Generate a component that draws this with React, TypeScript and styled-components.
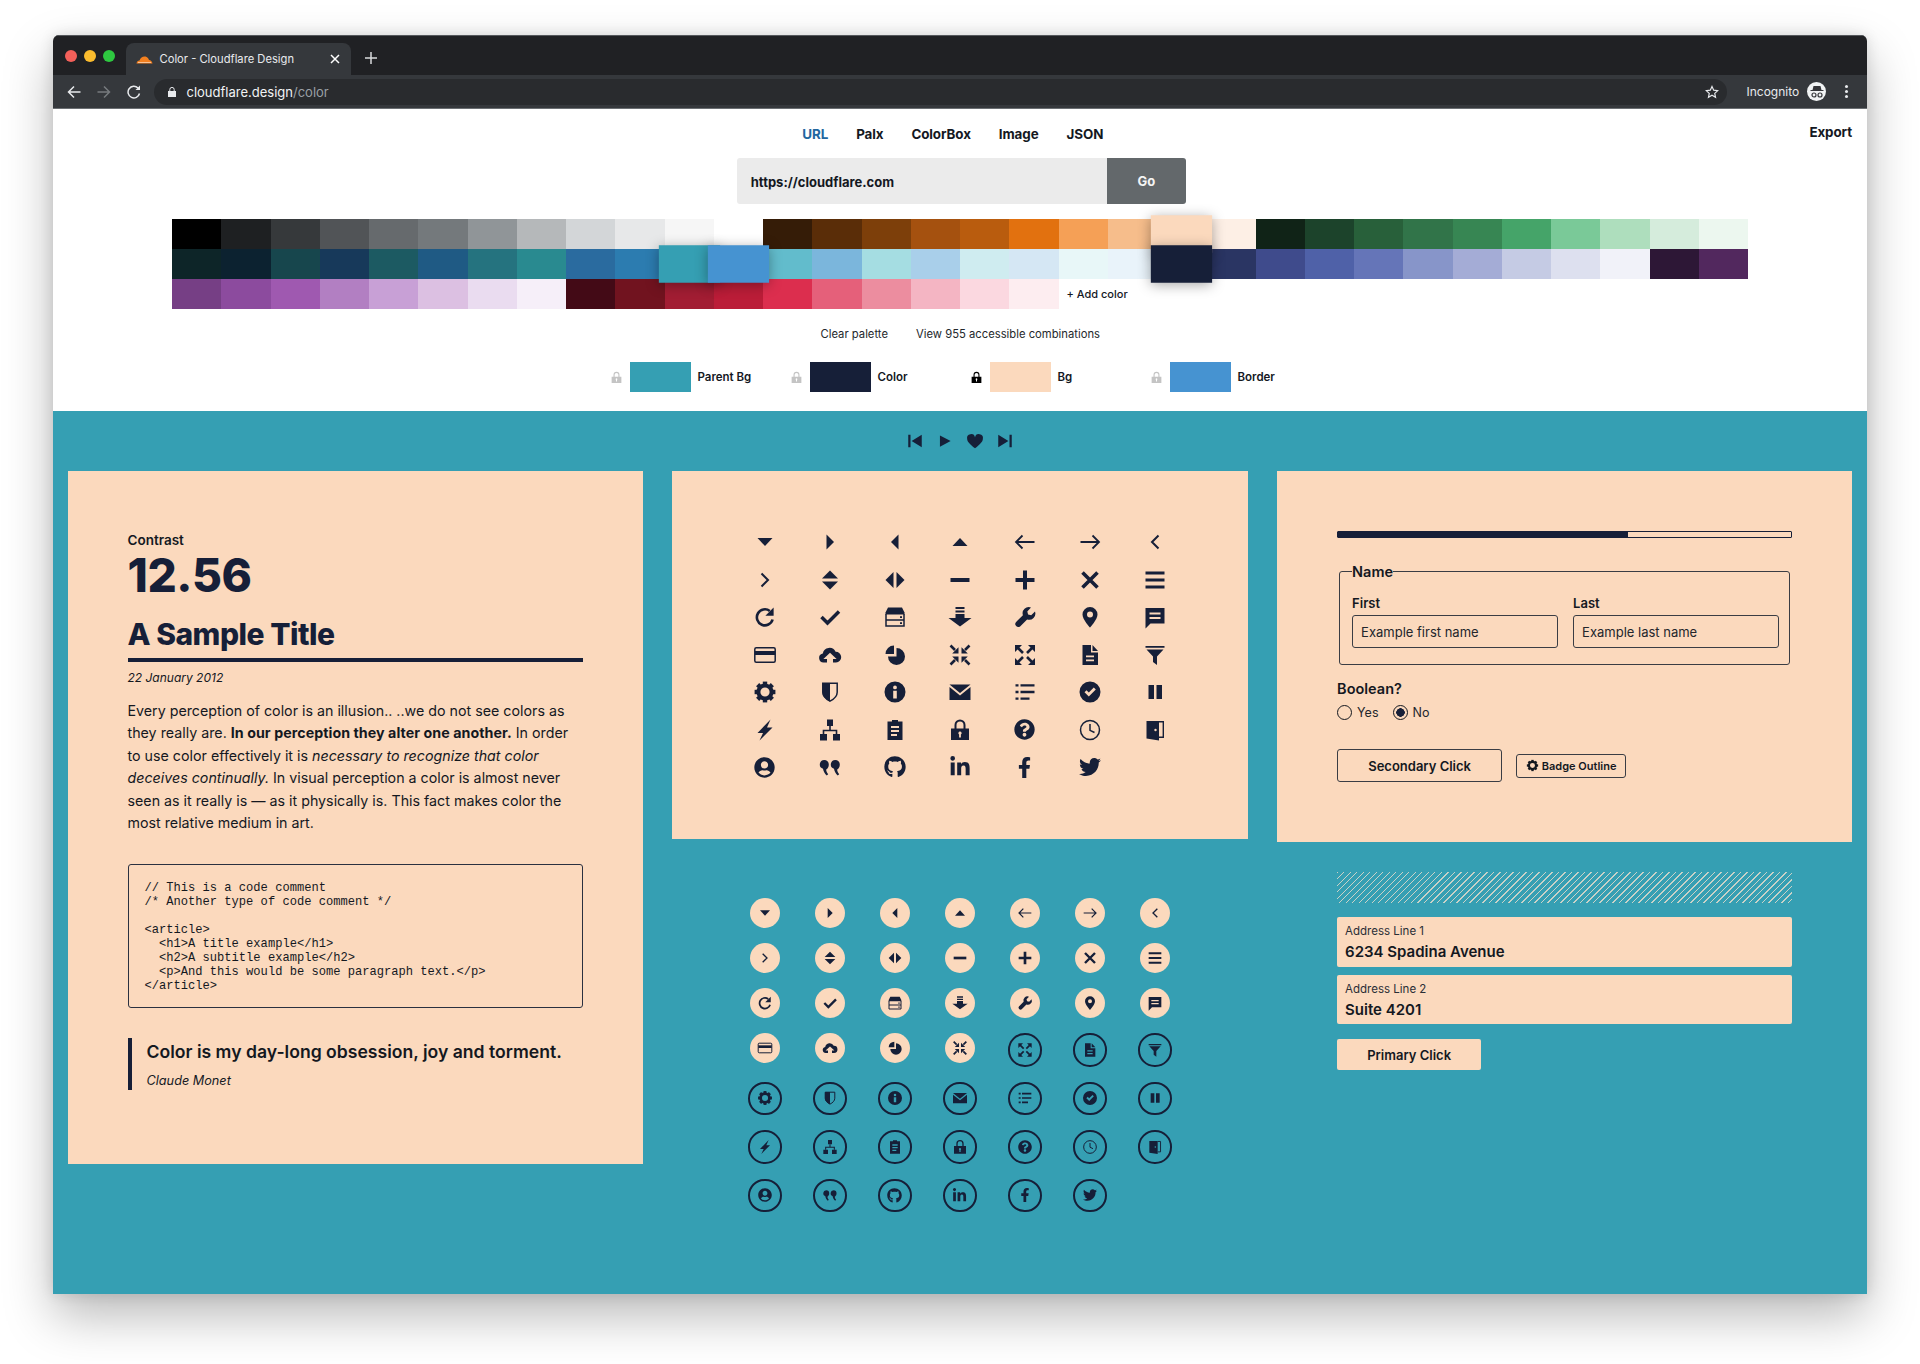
import React from 'react'
import styled, { createGlobalStyle } from 'styled-components'
import { FaFacebookF, FaGithub, FaLinkedinIn, FaQuestionCircle, FaTwitter, FaUserCircle } from 'react-icons/fa'

const TEAL = '#359fb3'
const PEACH = '#fbd9bd'
const NAVY = '#161f38'
const INK = '#14181f'

const GlobalStyle = createGlobalStyle`
    html, body {
        margin: 0;
        background: #ffffff;
        font-family: 'Inter', 'Liberation Sans', sans-serif;
        color: ${INK};
    }
    * {
        box-sizing: border-box;
    }
`

const P = (d: string) => <path d={d} fillRule="evenodd" />
const S = (d: string, w = 2) => <path d={d} fill="none" stroke="currentColor" strokeWidth={w} />

const Gear = () => (
    <>
        <circle cx="12" cy="12" r="6.6" fill="none" stroke="currentColor" strokeWidth="4" />
        {[0, 45, 90, 135, 180, 225, 270, 315].map((a) => (
            <rect key={a} x="9.8" y="1.6" width="4.4" height="4" transform={`rotate(${a} 12 12)`} />
        ))}
    </>
)

const QUOTE_MARK =
    'M6.3 5A4.5 4.5 0 0 0 5 13.8c.4 2.6 1.6 4.7 3.7 6.7l1.5-1.2C8.8 17.5 8.2 16 8.2 14.5c1.6-.9 2.6-2.5 2.6-5A4.5 4.5 0 0 0 6.3 5z'

const glyphs: Record<string, React.ReactNode> = {
    caretDown: P('M4.5 8h15L12 16z'),
    caretRight: P('M8.5 4.5v15L16 12z'),
    caretLeft: P('M15.5 4.5v15L8 12z'),
    caretUp: P('M4.5 16h15L12 8z'),
    arrowLeft: S('M21.5 12H3M9.5 5.5 3 12l6.5 6.5', 1.8),
    arrowRight: S('M2.5 12H21M14.5 5.5 21 12l-6.5 6.5', 1.8),
    chevronLeft: S('M15.5 5.5 9 12l6.5 6.5'),
    chevronRight: S('M8.5 5.5 15 12l-6.5 6.5'),
    upDown: P('M12 2.5 20 10.5H4zM12 21.5 4 13.5h16z'),
    leftRight: P('M2.5 12 10.5 4v16zM21.5 12 13.5 4v16z'),
    minus: P('M2.5 10h19v4h-19z'),
    plus: P('M10 2.5h4V10h7.5v4H14v7.5h-4V14H2.5v-4H10z'),
    close: S('M4.5 4.5 19.5 19.5M19.5 4.5 4.5 19.5', 3.6),
    menu: P('M2.5 3.5h19v3h-19zM2.5 10.5h19v3h-19zM2.5 17.5h19v3h-19z'),
    refresh: (
        <>
            {S('M19.6 14.5A8 8 0 1 1 16.8 6', 2.6)}
            {P('M20.6 2.6v8.2h-8.2z')}
        </>
    ),
    check: S('M3.5 12 9.5 18 21 6.5', 3.5),
    drawer: (
        <>
            {P('M5 2.5h14l2.5 5v2h-19v-2z')}
            {S('M3 9v12h18V9M3 15h18', 1.5)}
            {P('M17 11.3h2v1.8h-2zM17 17.3h2v1.8h-2z')}
        </>
    ),
    download: P('M7.5 2h9v2h-9zM7.5 5.5h9v2h-9zM7.5 9h9v4h7L12 21.5.5 13h7z'),
    wrench: P(
        'M22 6.5l-3.8 3.7-3.1-.7-.8-3.1L18 2.5a6.2 6.2 0 0 0-8.1 7.7L2.9 17.2a3 3 0 0 0 4.2 4.2l7-7A6.2 6.2 0 0 0 22 6.5z',
    ),
    pin: P(
        'M12 2a7.5 7.5 0 0 0-7.5 7.5C4.5 14.5 12 22.5 12 22.5s7.5-8 7.5-13A7.5 7.5 0 0 0 12 2zm0 10.5a3 3 0 1 1 0-6 3 3 0 0 1 0 6z',
    ),
    comment: P('M2.5 3h19v15.5H7.5L2.5 23.5zM6.5 7.5v2h11v-2zM6.5 12v2h11v-2z'),
    card: (
        <>
            <rect x="1.8" y="4.8" width="20.4" height="14.4" rx="1.5" fill="none" stroke="currentColor" strokeWidth="1.5" />
            <rect x="2" y="8" width="20" height="4" />
        </>
    ),
    cloud: P(
        'M6 19.5A4.6 4.6 0 0 1 4.8 10.4 6.8 6.8 0 0 1 17.6 8.7 5.4 5.4 0 0 1 18 19.5h-3v-3.6h3.6L12 9.8l-6.6 6.1H9v3.6z',
    ),
    pie: P('M13.5 5v8.5H5a8.5 8.5 0 1 0 8.5-8.5zM11 2.5V11H2.5A8.5 8.5 0 0 1 11 2.5z'),
    collapse: (
        <>
            {P('M10.5 10.5H4.2L10.5 4.2zM13.5 10.5h6.3L13.5 4.2zM10.5 13.5H4.2L10.5 19.8zM13.5 13.5h6.3L13.5 19.8z')}
            {S('M2.5 2.5 7 7M21.5 2.5 17 7M2.5 21.5 7 17M21.5 21.5 17 17', 2.6)}
        </>
    ),
    expand: (
        <>
            {P('M2 2h7L2 9zM22 2h-7l7 7zM2 22h7l-7-7zM22 22h-7l7-7z')}
            {S('M4 4 10 10M20 4 14 10M4 20 10 14M20 20 14 14', 2.6)}
        </>
    ),
    file: P('M4.5 2H13v7.5h7V22H4.5zM14.5 2 20 8h-5.5zM8 12.5v1.8h8v-1.8zM8 16.5v1.8h8v-1.8z'),
    filter: P('M2.5 3h19v1.8h-19zM3.5 6.5h17L14 13.5V22l-4-3v-5.5z'),
    gear: <Gear />,
    shield: (
        <>
            {S('M4.8 3.3h14.4v9c0 4-3.2 6.8-7.2 8.9-4-2.1-7.2-4.9-7.2-8.9z', 1.5)}
            {P('M4.5 3H12v18.5c-4-2-7.5-5-7.5-9z')}
        </>
    ),
    info: P(
        'M12 1.5a10.5 10.5 0 1 0 0 21 10.5 10.5 0 0 0 0-21zM12 5.5a1.9 1.9 0 1 1 0 3.8 1.9 1.9 0 0 1 0-3.8zM10.2 10.8h3.6v7.7h-3.6z',
    ),
    mail: P('M1.5 4.5h21L12 13zM1.5 7 12 15.5 22.5 7v13h-21z'),
    list: P('M2.5 4.2h3v2.4h-3zM7.5 4.2h14v2.4h-14zM2.5 10.8h3v2.4h-3zM7.5 10.8h14v2.4h-14zM2.5 17.4h3v2.4h-3zM7.5 17.4h9v2.4h-9z'),
    checkCircle: P('M12 1.5a10.5 10.5 0 1 0 0 21 10.5 10.5 0 0 0 0-21zM6.5 12.2l2-2 2.3 2.3 5-5 2 2-7 7z'),
    pause: P('M5.5 5H11v14H5.5zM13.5 5H19v14h-5.5z'),
    bolt: P('M17.5 1.5 4.5 15H10L6.5 22.5 19.5 9.5H14z'),
    sitemap: (
        <>
            {P('M9 1.5h6V8H9zM2 16h7v6.5H2zM15 16h7v6.5h-7z')}
            {S('M12 8v4M5.5 16v-3.5h13V16', 1.6)}
        </>
    ),
    clipboard: P('M4.5 3.5H9V2h6v1.5h4.5V22h-15zM8 8v2h8V8zM8 12v2h8v-2zM8 16v2h6v-2z'),
    lock: (
        <>
            {S('M7.5 11V7a4.5 4.5 0 0 1 9 0v4', 2)}
            {P('M3 10.5h18V22H3zM12 13.5a1.7 1.7 0 0 0-.9 3.1v2.9h1.8v-2.9a1.7 1.7 0 0 0-.9-3.1z')}
        </>
    ),
    clock: (
        <>
            <circle cx="12" cy="12" r="9.5" fill="none" stroke="currentColor" strokeWidth="1.5" />
            {S('M12 6v6.3l4.5 2.2', 1.5)}
        </>
    ),
    door: (
        <>
            {P('M3.5 3H16v19.5l-12.5-2zM12.5 10.8a1.2 1.2 0 1 0 0 2.4 1.2 1.2 0 0 0 0-2.4z')}
            {S('M16 3.7h4.3v15.6H16', 1.4)}
        </>
    ),
    quote: (
        <>
            <path d={QUOTE_MARK} />
            <path d={QUOTE_MARK} transform="translate(11 0)" />
        </>
    ),
}

const brands: Record<string, [React.ComponentType<{ size?: number }>, number]> = {
    question: [FaQuestionCircle, 0.88],
    user: [FaUserCircle, 0.88],
    github: [FaGithub, 0.92],
    linkedin: [FaLinkedinIn, 0.92],
    facebook: [FaFacebookF, 0.88],
    twitter: [FaTwitter, 0.9],
}

const iconOrder = [
    'caretDown', 'caretRight', 'caretLeft', 'caretUp', 'arrowLeft', 'arrowRight', 'chevronLeft',
    'chevronRight', 'upDown', 'leftRight', 'minus', 'plus', 'close', 'menu',
    'refresh', 'check', 'drawer', 'download', 'wrench', 'pin', 'comment',
    'card', 'cloud', 'pie', 'collapse', 'expand', 'file', 'filter',
    'gear', 'shield', 'info', 'mail', 'list', 'checkCircle', 'pause',
    'bolt', 'sitemap', 'clipboard', 'lock', 'question', 'clock', 'door',
    'user', 'quote', 'github', 'linkedin', 'facebook', 'twitter',
]

const Icon: React.FC<{ name: string; size?: number }> = ({ name, size = 24 }) => {
    const brand = brands[name]
    if (brand) {
        const Brand = brand[0]
        return <Brand size={Math.round(size * brand[1])} />
    }
    return (
        <svg width={size} height={size} viewBox="0 0 24 24" fill="currentColor">
            {glyphs[name]}
        </svg>
    )
}

const palette: string[][] = [
    [
        '#000000', '#1e2022', '#36393b', '#515457', '#666a6d', '#74797c', '#909598', '#b5b8ba', '#d3d6d8', '#e7e8e9', '#f6f6f6', '#ffffff',
        '#351c07', '#5a2d08', '#7d3f0a', '#a5510f', '#b95c0e', '#e2710f', '#f5a056', '#f6bd8b', PEACH, '#fdefe5',
        '#102317', '#1c432b', '#28603a', '#317449', '#378653', '#45a469', '#7ac998', '#aedebd', '#d5ecdc', '#ecf7ef',
    ],
    [
        '#0d2528', '#0c2230', '#17464d', '#17395a', '#1c5a62', '#1f5a84', '#25737f', '#298a90', '#2a6b9f', '#2c7cb0', TEAL, '#4693d1',
        '#62bccc', '#7bb6dc', '#a5dde2', '#a9cfea', '#cfecf0', '#d5e7f4', '#e8f7f8', '#e9f3fa', NAVY, '#2a3563',
        '#3f4b8c', '#4f61a8', '#6575b8', '#8795c9', '#a4acd6', '#c5cbe4', '#dde0ef', '#f1f2f9', '#2d1736', '#52285e',
    ],
    [
        '#763f85', '#8c4b9e', '#9f59b0', '#b27fc2', '#c8a0d6', '#dcc0e2', '#eadcf0', '#f6eff9',
        '#430a16', '#71131f', '#a21d33', '#bb1d38', '#dc2e4e', '#e5607a', '#ec8d9f', '#f4b5c3', '#fbd8e0', '#fdedf0',
    ],
]

const picked: Record<string, number> = { '0-20': 3, '1-10': 2, '1-11': 3, '1-20': 4 }

const roles = [
    { label: 'Parent Bg', color: TEAL, locked: false },
    { label: 'Color', color: NAVY, locked: false },
    { label: 'Bg', color: PEACH, locked: true },
    { label: 'Border', color: '#4693d1', locked: false },
]

const codeSample = `// This is a code comment
/* Another type of code comment */

<article>
  <h1>A title example</h1>
  <h2>A subtitle example</h2>
  <p>And this would be some paragraph text.</p>
</article>`

const App: React.FunctionComponent = () => {
    return (
        <Page>
            <GlobalStyle />
            <Window>
                <TabStrip>
                    <Lights>
                        <Light color="#f4605a" />
                        <Light color="#fbbc2e" />
                        <Light color="#2ec840" />
                    </Lights>
                    <Tab>
                        <svg width="17" height="9" viewBox="0 0 34 18">
                            <path d="M1 17c.5-4 3-6 6-6 2-6 7-9 12-8 3 .7 6 3 7 7 3 0 6 3 7 7z" fill="#f38020" />
                            <path d="M4 14h26v1.6H4z" fill="#fbd9bd" />
                        </svg>
                        <TabTitle>Color - Cloudflare Design</TabTitle>
                        <TabClose>
                            <svg width="10" height="10" viewBox="0 0 10 10">
                                <path d="M1 1l8 8M9 1 1 9" stroke="#fff" strokeWidth="1.5" />
                            </svg>
                        </TabClose>
                    </Tab>
                    <NewTab>
                        <svg width="12" height="12" viewBox="0 0 12 12">
                            <path d="M6 0v12M0 6h12" stroke="#d8dadc" strokeWidth="1.5" />
                        </svg>
                    </NewTab>
                </TabStrip>
                <Toolbar>
                    <NavIcons>
                        <svg width="14" height="14" viewBox="0 0 14 14" fill="none" stroke="#e8eaed" strokeWidth="1.5">
                            <path d="M13.5 7H1.5M7 1.5 1.5 7 7 12.5" />
                        </svg>
                        <svg width="14" height="14" viewBox="0 0 14 14" fill="none" stroke="#777a7e" strokeWidth="1.5">
                            <path d="M.5 7h12M7 1.5 12.5 7 7 12.5" />
                        </svg>
                        <svg width="14" height="14" viewBox="0 0 14 14" fill="none" stroke="#e8eaed" strokeWidth="1.5">
                            <path d="M12.5 8.5A5.8 5.8 0 1 1 11 3" />
                            <path d="M13 .5V5H8.5z" fill="#e8eaed" stroke="none" />
                        </svg>
                    </NavIcons>
                    <UrlPill>
                        <svg width="8" height="10" viewBox="0 0 8 10" fill="#e8eaed">
                            <path d="M0 4h8v6H0z" />
                            <path d="M1.8 4V2.6a2.2 2.2 0 0 1 4.4 0V4" fill="none" stroke="#e8eaed" />
                        </svg>
                        <UrlText>
                            cloudflare.design<UrlPath>/color</UrlPath>
                        </UrlText>
                        <StarSlot>
                            <svg width="14" height="14" viewBox="0 0 24 24" fill="none" stroke="#e8eaed" strokeWidth="2">
                                <path d="M12 2.5l2.9 6.3 6.9.8-5.1 4.7 1.4 6.8L12 17.6l-6.1 3.5 1.4-6.8L2.2 9.6l6.9-.8z" />
                            </svg>
                        </StarSlot>
                    </UrlPill>
                    <Incognito>Incognito</Incognito>
                    <Avatar>
                        <svg width="16" height="16" viewBox="0 0 16 16" fill="#35363a">
                            <path d="M4.5 2h7l1 4h2v1h-13V6h2z" />
                            <circle cx="5" cy="11" r="2" fill="none" stroke="#35363a" strokeWidth="1.2" />
                            <circle cx="11" cy="11" r="2" fill="none" stroke="#35363a" strokeWidth="1.2" />
                        </svg>
                    </Avatar>
                    <Kebab>
                        <i />
                        <i />
                        <i />
                    </Kebab>
                </Toolbar>

                <Header>
                    <TopNav>
                        <NavLink $active>URL</NavLink>
                        <NavLink>Palx</NavLink>
                        <NavLink>ColorBox</NavLink>
                        <NavLink>Image</NavLink>
                        <NavLink>JSON</NavLink>
                        <ExportLink>Export</ExportLink>
                    </TopNav>
                    <UrlForm>
                        <UrlInput>https://cloudflare.com</UrlInput>
                        <GoButton>Go</GoButton>
                    </UrlForm>
                    <Palette>
                        {palette.map((row, r) =>
                            row.map((color, c) => (
                                <Swatch key={`${r}-${c}`} $color={color} $pick={picked[`${r}-${c}`] ?? 0} />
                            )),
                        )}
                        <AddColor>+ Add color</AddColor>
                    </Palette>
                    <PaletteLinks>
                        <span>Clear palette</span>
                        <span>View 955 accessible combinations</span>
                    </PaletteLinks>
                    <Roles>
                        {roles.map((role) => (
                            <Role key={role.label}>
                                <LockSlot $locked={role.locked}>
                                    <Icon name="lock" size={13} />
                                </LockSlot>
                                <RoleChip $color={role.color} />
                                <RoleLabel>{role.label}</RoleLabel>
                            </Role>
                        ))}
                    </Roles>
                </Header>

                <Stage>
                    <Transport>
                        <svg width="18" height="18" viewBox="0 0 16 16" fill="currentColor">
                            <path d="M2 2.5h2v11H2zM14 2.5v11L5 8z" />
                        </svg>
                        <svg width="18" height="18" viewBox="0 0 16 16" fill="currentColor">
                            <path d="M3.5 3v10L13 8z" />
                        </svg>
                        <svg width="18" height="18" viewBox="0 0 16 16" fill="currentColor">
                            <path d="M8 14.5C3.5 11 1 8.5 1 6a3.5 3.5 0 0 1 7-1.2A3.5 3.5 0 0 1 15 6c0 2.5-2.5 5-7 8.5z" />
                        </svg>
                        <svg width="18" height="18" viewBox="0 0 16 16" fill="currentColor">
                            <path d="M14 2.5h-2v11h2zM2 2.5v11L11 8z" />
                        </svg>
                    </Transport>
                    <Columns>
                        <ArticleCard>
                            <ContrastLabel>Contrast</ContrastLabel>
                            <ContrastValue>12.56</ContrastValue>
                            <Title>A Sample Title</Title>
                            <DateLine>22 January 2012</DateLine>
                            <Body>
                                Every perception of color is an illusion.. ..we do not see colors as they really are.{' '}
                                <strong>In our perception they alter one another.</strong> In order to use color
                                effectively it is <em>necessary to recognize that color deceives continually.</em> In
                                visual perception a color is almost never seen as it really is — as it physically is.
                                This fact makes color the most relative medium in art.
                            </Body>
                            <CodeBlock>{codeSample}</CodeBlock>
                            <Quote>
                                <QuoteText>Color is my day-long obsession, joy and torment.</QuoteText>
                                <QuoteSource>Claude Monet</QuoteSource>
                            </Quote>
                        </ArticleCard>

                        <div>
                            <IconCard>
                                {iconOrder.map((name) => (
                                    <IconCell key={name}>
                                        <Icon name={name} />
                                    </IconCell>
                                ))}
                            </IconCard>
                            <RoundGrid>
                                {iconOrder.map((name, i) =>
                                    i < 25 ? (
                                        <SolidRound key={name}>
                                            <Icon name={name} size={16} />
                                        </SolidRound>
                                    ) : (
                                        <RingRound key={name}>
                                            <Icon name={name} size={16} />
                                        </RingRound>
                                    ),
                                )}
                            </RoundGrid>
                        </div>

                        <div>
                            <FormCard>
                                <Progress>
                                    <ProgressFill style={{ width: '64%' }} />
                                </Progress>
                                <NameFieldset>
                                    <Legend>Name</Legend>
                                    <NameFields>
                                        <div>
                                            <FieldLabel>First</FieldLabel>
                                            <TextField>Example first name</TextField>
                                        </div>
                                        <div>
                                            <FieldLabel>Last</FieldLabel>
                                            <TextField>Example last name</TextField>
                                        </div>
                                    </NameFields>
                                </NameFieldset>
                                <BooleanLabel>Boolean?</BooleanLabel>
                                <RadioRow>
                                    <RadioDot />
                                    <RadioText>Yes</RadioText>
                                    <RadioDot $on />
                                    <RadioText>No</RadioText>
                                </RadioRow>
                                <ButtonRow>
                                    <SecondaryButton>Secondary Click</SecondaryButton>
                                    <Badge>
                                        <Icon name="gear" size={13} />
                                        Badge Outline
                                    </Badge>
                                </ButtonRow>
                            </FormCard>
                            <AddressColumn>
                                <Stripes />
                                <AddressBox>
                                    <AddressLabel>Address Line 1</AddressLabel>
                                    <AddressValue>6234 Spadina Avenue</AddressValue>
                                </AddressBox>
                                <AddressBox $tight>
                                    <AddressLabel>Address Line 2</AddressLabel>
                                    <AddressValue>Suite 4201</AddressValue>
                                </AddressBox>
                                <PrimaryButton>Primary Click</PrimaryButton>
                            </AddressColumn>
                        </div>
                    </Columns>
                </Stage>
            </Window>
        </Page>
    )
}

const Page = styled.div`
    width: 1920px;
    height: 1364px;
    padding: 35px 53px 0 52.5px;
    overflow: hidden;
`

const Window = styled.div`
    height: 1259px;
    border-radius: 6px 6px 0 0;
    overflow: hidden;
    display: flex;
    flex-direction: column;
    box-shadow: 0 22px 50px rgba(0, 0, 0, 0.28), 0 0 14px rgba(0, 0, 0, 0.12);
    background: #ffffff;
`

const TabStrip = styled.div`
    height: 40px;
    flex: none;
    display: flex;
    align-items: flex-end;
    background: #202124;
    border-top: 1px solid #55585c;
`

const Lights = styled.div`
    width: 73px;
    align-self: flex-start;
    display: flex;
    gap: 7px;
    padding: 14px 0 0 12px;
`

const Light = styled.span<{ color: string }>`
    width: 12px;
    height: 12px;
    border-radius: 50%;
    background: ${(p) => p.color};
`

const Tab = styled.div`
    width: 225px;
    height: 32px;
    display: flex;
    align-items: center;
    padding: 0 10px;
    border-radius: 8px 8px 0 0;
    background: #35383c;
`

const TabTitle = styled.span`
    margin-left: 7px;
    flex: 1;
    font-size: 11.2px;
    color: #e8eaed;
`

const TabClose = styled.span`
    display: flex;
    margin-right: 1px;
`

const NewTab = styled.span`
    display: flex;
    align-self: center;
    margin: 4px 0 0 14px;
`

const Toolbar = styled.div`
    height: 34px;
    flex: none;
    display: flex;
    align-items: center;
    background: #35383c;
    border-bottom: 1px solid #6b6f73;
    color: #e8eaed;
`

const NavIcons = styled.div`
    width: 101px;
    display: flex;
    gap: 16px;
    padding-left: 14px;
`

const UrlPill = styled.div`
    width: 1573px;
    height: 26px;
    display: flex;
    align-items: center;
    padding: 0 8px 0 14px;
    border-radius: 13px;
    background: #292b2e;
`

const UrlText = styled.span`
    margin-left: 11px;
    flex: 1;
    font-size: 13px;
    color: #f1f3f4;
`

const UrlPath = styled.span`
    color: #9aa0a6;
`

const StarSlot = styled.span`
    display: flex;
`

const Incognito = styled.span`
    margin-left: 20px;
    font-size: 12px;
    white-space: nowrap;
`

const Avatar = styled.span`
    width: 19px;
    height: 19px;
    margin-left: 8px;
    display: flex;
    align-items: center;
    justify-content: center;
    border-radius: 50%;
    background: #f1f3f4;
`

const Kebab = styled.span`
    margin-left: 19px;
    display: flex;
    flex-direction: column;
    gap: 2px;

    i {
        width: 3px;
        height: 3px;
        border-radius: 50%;
        background: #e8eaed;
    }
`

const Header = styled.header`
    height: 302px;
    flex: none;
    display: flex;
    flex-direction: column;
    background: #ffffff;
    padding: 15px 0 0;
`

const TopNav = styled.nav`
    position: relative;
    display: flex;
    justify-content: center;
    gap: 28px;
    height: 20px;
    align-items: center;
    padding-right: 14px;
`

const NavLink = styled.a<{ $active?: boolean }>`
    font-size: 13.4px;
    font-weight: 700;
    letter-spacing: -0.1px;
    color: ${(p) => (p.$active ? '#22679f' : INK)};
`

const ExportLink = styled.a`
    position: absolute;
    right: 15px;
    top: 0;
    font-size: 13.4px;
    font-weight: 700;
    letter-spacing: -0.1px;
    color: ${INK};
`

const UrlForm = styled.div`
    display: flex;
    align-self: center;
    width: 449px;
    height: 46px;
    margin: 14px 0 0 3px;
`

const UrlInput = styled.div`
    flex: 1;
    display: flex;
    align-items: center;
    padding: 1px 0 0 14px;
    background: #ebebeb;
    border-radius: 3px 0 0 3px;
    font-size: 13px;
    font-weight: 700;
`

const GoButton = styled.div`
    width: 79px;
    display: flex;
    align-items: center;
    justify-content: center;
    background: #63686b;
    border-radius: 0 3px 3px 0;
    font-size: 13px;
    font-weight: 700;
    color: #f4f4f4;
`

const Palette = styled.div`
    display: grid;
    grid-template-columns: repeat(32, 49.25px);
    grid-auto-rows: 30px;
    margin: 15px 0 0 119.5px;
`

const Swatch = styled.div<{ $color: string; $pick: number }>`
    background: ${(p) => p.$color};
    ${(p) =>
        p.$pick > 0 &&
        `
        position: relative;
        z-index: ${p.$pick};
        transform: scale(1.25);
        box-shadow: 0 2px 10px rgba(0, 0, 0, 0.35);
    `}
`

const AddColor = styled.div`
    grid-column: span 3;
    display: flex;
    align-items: center;
    padding-left: 8px;
    font-size: 11px;
    font-weight: 500;
    white-space: nowrap;
`

const PaletteLinks = styled.div`
    display: flex;
    gap: 28px;
    margin: 17px 0 0 768px;
    font-size: 11.25px;
    color: #24282c;
    line-height: 16px;
`

const Roles = styled.div`
    display: grid;
    grid-template-columns: repeat(4, 180px);
    margin: 20px 0 0 547px;
`

const Role = styled.div`
    display: flex;
    align-items: center;
    padding-left: 10px;
`

const LockSlot = styled.span<{ $locked: boolean }>`
    width: 20px;
    display: flex;
    color: ${(p) => (p.$locked ? '#000000' : '#c4c4c4')};
`

const RoleChip = styled.span<{ $color: string }>`
    width: 61px;
    height: 30px;
    background: ${(p) => p.$color};
`

const RoleLabel = styled.span`
    margin-left: 7px;
    font-size: 11.5px;
    font-weight: 600;
`

const Stage = styled.main`
    flex: 1;
    background: ${TEAL};
    padding: 0 15px;
    color: ${INK};
`

const Transport = styled.div`
    height: 60px;
    display: flex;
    align-items: center;
    justify-content: center;
    gap: 12px;
    color: ${NAVY};
`

const Columns = styled.div`
    display: grid;
    grid-template-columns: repeat(3, 575.3px);
    column-gap: 29.5px;
    align-items: start;
`

const ArticleCard = styled.article`
    height: 693px;
    padding: 60px;
    background: ${PEACH};
`

const ContrastLabel = styled.div`
    font-size: 13.5px;
    font-weight: 600;
    line-height: 18px;
`

const ContrastValue = styled.div`
    margin-top: 3px;
    font-size: 46px;
    font-weight: 800;
    line-height: 46px;
    letter-spacing: -0.4px;
    color: ${NAVY};
`

const Title = styled.h1`
    margin: 18px 0 0;
    padding-bottom: 6px;
    border-bottom: 4px solid ${NAVY};
    font-size: 30px;
    font-weight: 800;
    line-height: 36px;
    letter-spacing: -0.5px;
    color: ${NAVY};
`

const DateLine = styled.div`
    margin-top: 8px;
    font-size: 12px;
    font-style: italic;
    line-height: 16px;
`

const Body = styled.p`
    margin: 13.5px 0 0;
    font-size: 14.25px;
    line-height: 22.5px;

    strong {
        font-weight: 700;
        letter-spacing: 0.05px;
    }
`

const CodeBlock = styled.pre`
    margin: 29px 0 0;
    height: 144px;
    padding: 16px;
    border: 1px solid #2a3040;
    border-radius: 3px;
    font-family: 'Liberation Mono', monospace;
    font-size: 12.1px;
    line-height: 14px;
`

const Quote = styled.blockquote`
    margin: 30.5px 0 0;
    height: 52px;
    padding: 4px 0 0 15px;
    border-left: 4px solid ${NAVY};
`

const QuoteText = styled.div`
    font-size: 17.6px;
    font-weight: 600;
    line-height: 20px;
`

const QuoteSource = styled.div`
    margin-top: 11px;
    font-size: 12.7px;
    font-style: italic;
    line-height: 16px;
`

const IconCard = styled.section`
    display: grid;
    grid-template-columns: repeat(7, 1fr);
    grid-auto-rows: 37.5px;
    height: 368px;
    padding: 52.5px 60px 0;
    background: ${PEACH};
    color: ${NAVY};
`

const IconCell = styled.div`
    display: flex;
    align-items: center;
    justify-content: center;
`

const RoundGrid = styled.div`
    display: grid;
    grid-template-columns: repeat(7, 1fr);
    row-gap: 15px;
    align-items: start;
    justify-items: center;
    padding: 59px 60px 0;
    color: ${NAVY};
`

const SolidRound = styled.div`
    width: 30px;
    height: 30px;
    display: flex;
    align-items: center;
    justify-content: center;
    border-radius: 50%;
    background: ${PEACH};
`

const RingRound = styled.div`
    width: 33.5px;
    height: 33.5px;
    display: flex;
    align-items: center;
    justify-content: center;
    border-radius: 50%;
    border: 2px solid ${NAVY};
`

const FormCard = styled.section`
    height: 371px;
    padding: 60px 60px 0;
    background: ${PEACH};
`

const Progress = styled.div`
    height: 7px;
    border: 1px solid ${NAVY};
    border-radius: 1px;
    background: ${PEACH};
`

const ProgressFill = styled.div`
    height: 100%;
    background: ${NAVY};
`

const NameFieldset = styled.div`
    position: relative;
    height: 94px;
    margin: 33px 2px 0;
    padding: 23px 12px 0;
    border: 1px solid #3a3d44;
    border-radius: 3px;
`

const Legend = styled.span`
    position: absolute;
    left: 12px;
    top: -9px;
    background: ${PEACH};
    font-size: 14.5px;
    font-weight: 600;
    line-height: 18px;
`

const NameFields = styled.div`
    display: grid;
    grid-template-columns: 206px 206px;
    column-gap: 15px;
`

const FieldLabel = styled.div`
    font-size: 13px;
    font-weight: 600;
    line-height: 16px;
`

const TextField = styled.div`
    height: 33px;
    margin-top: 4px;
    display: flex;
    align-items: center;
    padding-left: 8px;
    border: 1px solid #3a3d44;
    border-radius: 3px;
    font-size: 13px;
    color: #23262c;
`

const BooleanLabel = styled.div`
    margin-top: 14px;
    font-size: 14.5px;
    font-weight: 600;
    line-height: 20px;
`

const RadioRow = styled.div`
    display: flex;
    align-items: center;
    height: 18px;
    margin-top: 4px;
`

const RadioDot = styled.span<{ $on?: boolean }>`
    width: 15px;
    height: 15px;
    border-radius: 50%;
    border: 1.5px solid ${INK};
    background: ${(p) => (p.$on ? `radial-gradient(circle, ${NAVY} 0 4px, transparent 4.5px)` : 'transparent')};
`

const RadioText = styled.span`
    margin: 0 14px 0 5px;
    font-size: 12.5px;
    color: #23262c;
`

const ButtonRow = styled.div`
    display: flex;
    align-items: center;
    gap: 14px;
    margin-top: 28px;
`

const SecondaryButton = styled.div`
    width: 165px;
    height: 33px;
    display: flex;
    align-items: center;
    justify-content: center;
    border: 1px solid #3a3d44;
    border-radius: 3px;
    font-size: 13px;
    font-weight: 600;
`

const Badge = styled.div`
    width: 110px;
    height: 24px;
    display: flex;
    align-items: center;
    justify-content: center;
    gap: 3px;
    border: 1px solid #3a3d44;
    border-radius: 3px;
    font-size: 11px;
    font-weight: 600;
    white-space: nowrap;
`

const AddressColumn = styled.div`
    padding: 30px 60px 0;
`

const Stripes = styled.div`
    height: 31px;
    margin-bottom: 14px;
    background: repeating-linear-gradient(
        135deg,
        rgba(251, 226, 205, 0.75) 0 1px,
        transparent 1px 4.6px
    );
`

const AddressBox = styled.div<{ $tight?: boolean }>`
    height: 49.5px;
    margin-top: ${(p) => (p.$tight ? '8px' : '0')};
    padding: 7px 8px 0;
    border-radius: 2px;
    background: ${PEACH};
`

const AddressLabel = styled.div`
    font-size: 11.5px;
    line-height: 15px;
    color: #2a2e36;
`

const AddressValue = styled.div`
    margin-top: 3px;
    font-size: 15px;
    font-weight: 600;
    line-height: 20px;
`

const PrimaryButton = styled.div`
    width: 144px;
    height: 31px;
    margin-top: 15px;
    display: flex;
    align-items: center;
    justify-content: center;
    border-radius: 2px;
    background: ${PEACH};
    font-size: 13px;
    font-weight: 600;
`

export default App
